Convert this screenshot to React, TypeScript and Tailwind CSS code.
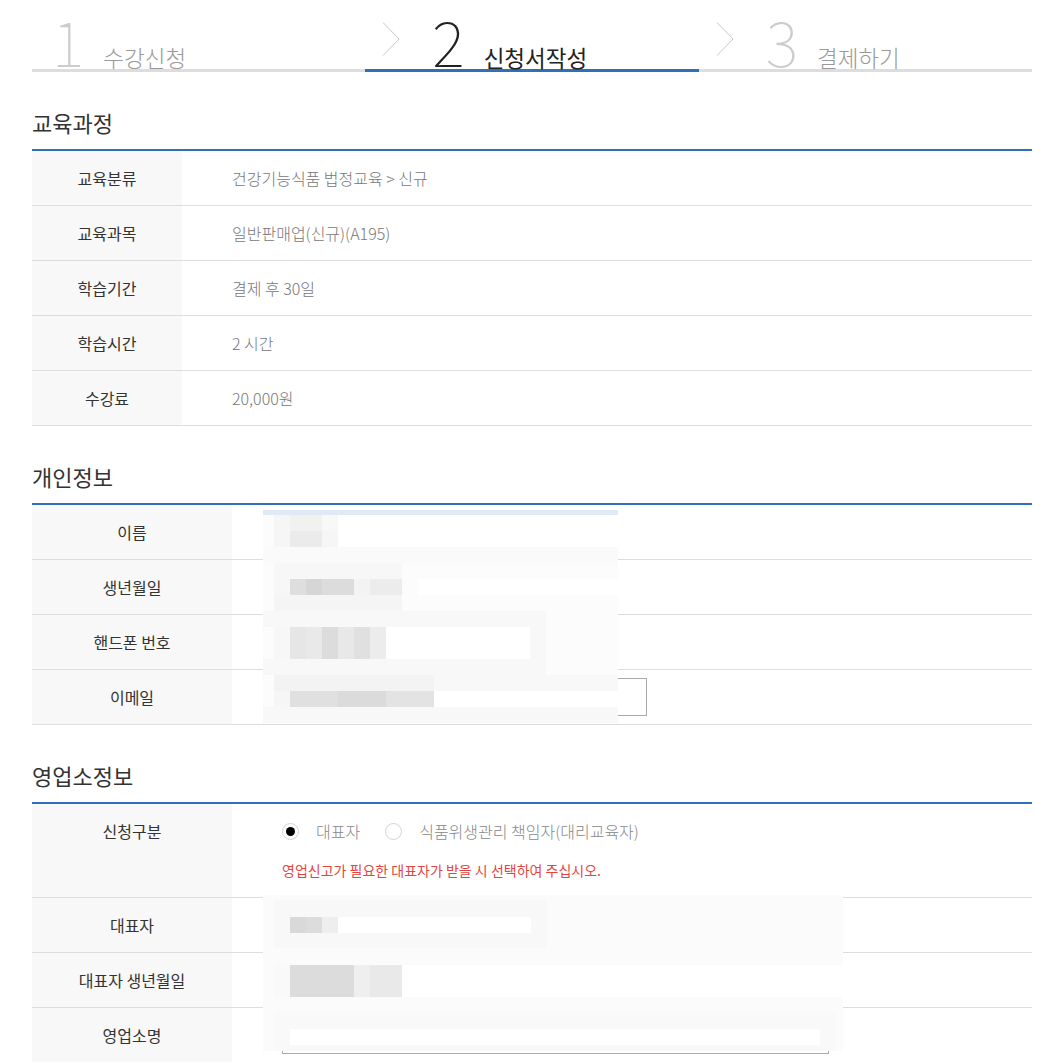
import React, { ReactNode } from 'react';

type Rect = [number, number, number, number, string];

// blurred (mosaic) patches laid over the personal info fields
const personalMosaic: Rect[] = [
  [263, 510, 355, 5, '#dfeaf6'],
  [263, 515, 355, 209, '#fcfcfc'],
  [274, 515, 16, 32, '#f6f6f6'],
  [290, 515, 32, 16, '#f1f1ef'],
  [322, 515, 16, 16, '#f8f8f8'],
  [290, 531, 32, 16, '#ebebeb'],
  [322, 531, 16, 16, '#f6f6f6'],
  [338, 515, 280, 32, '#ffffff'],
  [263, 547, 355, 16, '#fafafa'],
  [274, 563, 128, 16, '#f7f7f7'],
  [274, 579, 16, 16, '#f7f7f7'],
  [290, 579, 16, 16, '#dedede'],
  [306, 579, 16, 16, '#d6d6d6'],
  [322, 579, 32, 16, '#dcdcdc'],
  [354, 579, 16, 16, '#f3f3f3'],
  [370, 579, 32, 16, '#ececec'],
  [418, 579, 200, 16, '#ffffff'],
  [274, 595, 128, 16, '#f5f5f5'],
  [263, 611, 283, 16, '#f8f8f8'],
  [274, 627, 16, 32, '#f7f7f7'],
  [290, 627, 16, 32, '#e6e6e6'],
  [306, 627, 16, 32, '#e9e9e9'],
  [322, 627, 16, 32, '#dcdcdc'],
  [338, 627, 16, 32, '#e8e8e8'],
  [354, 627, 16, 32, '#e0e0e0'],
  [370, 627, 16, 32, '#ececec'],
  [386, 627, 144, 32, '#ffffff'],
  [530, 627, 16, 32, '#f8f8f8'],
  [263, 659, 283, 16, '#f8f8f8'],
  [274, 675, 160, 16, '#f3f3f3'],
  [434, 675, 184, 16, '#f8f8f8'],
  [274, 691, 16, 16, '#f6f6f6'],
  [290, 691, 48, 16, '#e0e0e0'],
  [338, 691, 48, 16, '#dbdbdb'],
  [386, 691, 48, 16, '#e3e3e3'],
  [434, 691, 184, 16, '#ffffff'],
  [263, 707, 355, 16, '#f8f8f8'],
];

const businessMosaic: Rect[] = [
  [263, 895, 580, 156, '#fbfbfb'],
  [274, 900, 273, 48, '#f8f8f8'],
  [290, 917, 16, 16, '#d9d9d9'],
  [306, 917, 16, 16, '#dcdcdc'],
  [322, 917, 16, 16, '#eeeeee'],
  [338, 917, 193, 16, '#ffffff'],
  [274, 965, 16, 32, '#f9f9f9'],
  [290, 965, 64, 32, '#dcdcdc'],
  [354, 965, 16, 32, '#efefef'],
  [370, 965, 32, 32, '#e9e9e9'],
  [402, 965, 441, 32, '#ffffff'],
  [274, 1013, 562, 38, '#f9f9f9'],
  [290, 1029, 530, 16, '#ffffff'],
];

function Mosaic({ rects }: { rects: Rect[] }) {
  return (
    <>
      {rects.map(([x, y, w, h, c], i) => (
        <div
          key={i}
          className="absolute"
          style={{ left: x, top: y, width: w, height: h, background: c }}
        />
      ))}
    </>
  );
}

function Chevron() {
  return (
    <svg width="18" height="34" viewBox="0 0 18 34" className="mb-[13px] shrink-0">
      <path d="M1 0.5 L17 17 L1 33.5" fill="none" stroke="#c8c8c8" strokeWidth="1" />
    </svg>
  );
}

const steps = [
  { n: '1', label: '수강신청', active: false },
  { n: '2', label: '신청서작성', active: true },
  { n: '3', label: '결제하기', active: false },
];

function StepBar() {
  return (
    <div className="grid grid-cols-3">
      {steps.map((s, i) => (
        <div
          key={s.n}
          className={`flex items-end h-[72px] border-b-[3px] ${
            s.active ? 'border-[#3070bb]' : 'border-[#dddddd]'
          } ${i === 0 ? 'pl-[20px]' : 'pl-[17px]'}`}
        >
          {i > 0 && <Chevron />}
          <div className={`flex items-baseline gap-[19px] mb-[-2px] ${i > 0 ? 'ml-[32px]' : ''}`}>
            <span
              className={`text-[62px] leading-none font-thin ${
                s.active ? 'text-[#222222]' : 'text-[#cccccc]'
              }`}
            >
              {s.n}
            </span>
            <span
              className={`text-[22.5px] leading-none ${
                s.active ? 'text-[#222222]' : 'text-[#999999] font-light'
              }`}
            >
              {s.label}
            </span>
          </div>
        </div>
      ))}
    </div>
  );
}

function Section({ title, children }: { title: string; children: ReactNode }) {
  return (
    <section className="pt-[34px]">
      <h2 className="text-[22px] leading-[33px] mb-[10px] text-[#333333]">{title}</h2>
      <div className="border-t-2 border-[#3070bb]">{children}</div>
    </section>
  );
}

function Row({
  label,
  labelW,
  children,
  top = false,
}: {
  label: string;
  labelW: string;
  children?: ReactNode;
  top?: boolean;
}) {
  return (
    <div className={`flex border-b border-[#dddddd] ${top ? '' : 'h-[55px]'}`}>
      <div
        className={`${labelW} shrink-0 bg-[#f8f8f8] flex justify-center text-[16px] text-[#333333] ${
          top ? 'pt-[17px] leading-[20px]' : 'items-center'
        }`}
      >
        {label}
      </div>
      <div className={`flex-1 pl-[50px] text-[16px] font-light text-[#777777] ${top ? '' : 'flex items-center'}`}>
        {children}
      </div>
    </div>
  );
}

function Radio({ checked, label }: { checked?: boolean; label: string }) {
  return (
    <label className="flex items-center gap-[17px]">
      <span className="w-[17px] h-[17px] rounded-full border border-[#d4d4d4] bg-white flex items-center justify-center">
        {checked && <span className="w-[9px] h-[9px] rounded-full bg-black" />}
      </span>
      <span className="text-[16px] font-light text-[#888888]">{label}</span>
    </label>
  );
}

export default function App() {
  return (
    <div className="relative w-[1062px] h-[1062px] overflow-hidden bg-white font-['Noto_Sans_CJK_KR','Noto_Sans',sans-serif]">
      <div className="pl-[32px] pr-[30px]">
        <StepBar />

        <Section title="교육과정">
          <Row label="교육분류" labelW="w-[150px]">건강기능식품 법정교육 &gt; 신규</Row>
          <Row label="교육과목" labelW="w-[150px]">일반판매업(신규)(A195)</Row>
          <Row label="학습기간" labelW="w-[150px]">결제 후 30일</Row>
          <Row label="학습시간" labelW="w-[150px]">2 시간</Row>
          <Row label="수강료" labelW="w-[150px]">20,000원</Row>
        </Section>

        <Section title="개인정보">
          <Row label="이름" labelW="w-[200px]" />
          <Row label="생년월일" labelW="w-[200px]" />
          <Row label="핸드폰 번호" labelW="w-[200px]" />
          <Row label="이메일" labelW="w-[200px]">
            <div className="w-[365px] h-[38px] border border-[#aaaaaa]" />
          </Row>
        </Section>

        <Section title="영업소정보">
          <Row label="신청구분" labelW="w-[200px]" top>
            <div className="pt-[17px] pb-[17px]">
              <div className="flex items-center gap-[25px] h-[20px]">
                <Radio checked label="대표자" />
                <Radio label="식품위생관리 책임자(대리교육자)" />
              </div>
              <p className="mt-[19px] leading-[20px] text-[14px] font-normal text-[#e5453f]">
                영업신고가 필요한 대표자가 받을 시 선택하여 주십시오.
              </p>
            </div>
          </Row>
          <Row label="대표자" labelW="w-[200px]" />
          <Row label="대표자 생년월일" labelW="w-[200px]" />
          <Row label="영업소명" labelW="w-[200px]">
            <div className="w-[547px] h-[38px] border border-[#aaaaaa]" />
          </Row>
        </Section>
      </div>

      <Mosaic rects={personalMosaic} />
      <Mosaic rects={businessMosaic} />
    </div>
  );
}
